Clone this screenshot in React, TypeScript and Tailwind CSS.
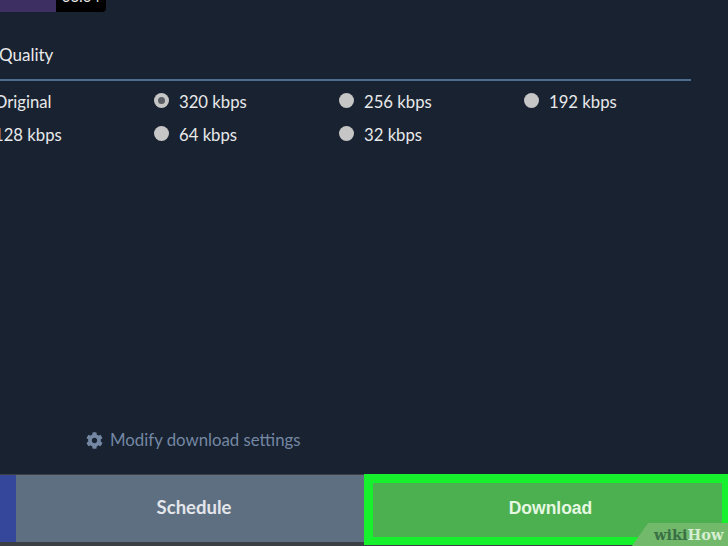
import { FaCog } from "react-icons/fa";

const rows = [
  ["Original", "320 kbps", "256 kbps", "192 kbps"],
  ["128 kbps", "64 kbps", "32 kbps"],
];

const Radio = ({ checked }: { checked: boolean }) => (
  <span className="flex items-center justify-center w-[15px] h-[15px] -mt-[3px] rounded-full bg-[#c6c6c6] shrink-0">
    {checked && <span className="w-[7px] h-[7px] rounded-full bg-[#5a5f66]" />}
  </span>
);

export default function App() {
  return (
    <div className="relative flex flex-col w-[728px] h-[546px] overflow-hidden bg-[#182230] font-['Lato','Noto_Sans',sans-serif] text-[#e8e9ea]">
      <div className="flex h-3 shrink-0">
        <div className="w-[56px] bg-[#3e2f63]" />
        <div className="w-[50px] bg-black rounded-br text-[15px] leading-[12px] text-center overflow-hidden">
          <span className="block -mt-[10px]">03:04</span>
        </div>
      </div>

      <div className="mt-[33px] h-5 text-[17px] leading-5 -ml-px">Quality</div>
      <div className="mt-[14px] w-[691px] h-[2px] bg-[#4a6d92] shrink-0" />

      <div className="mt-[11px] -ml-[31px] flex flex-col gap-[13px] text-[16.7px]">
        {rows.map((row, i) => (
          <div key={i} className="flex h-5 items-center">
            {row.map((label) => (
              <div key={label} className="flex items-center gap-[10px] w-[185px] shrink-0">
                <Radio checked={label === "320 kbps"} />
                <span className="leading-5">{label}</span>
              </div>
            ))}
          </div>
        ))}
      </div>

      <div className="mt-auto flex items-center gap-[7px] pl-[86px] pb-[24px] text-[#7487a3] text-[16.8px] leading-5">
        <FaCog size={17} />
        <span>Modify download settings</span>
      </div>

      <div className="flex h-[72px] shrink-0 bg-[#3c3f44]">
        <div className="w-[16px] h-[67px] mt-px bg-[#35479b]" />
        <div className="w-[348px] h-[67px] mt-px pl-2 pb-[2px] bg-[#5f6f82] flex items-center justify-center font-bold text-[18.5px] text-[#e3e6ea]">
          Schedule
        </div>
        <div className="flex-1 border-[9px] border-b-[8px] border-r-[6px] border-[#17f02c] bg-[#4caf50] pl-[6px] pb-[4px] flex items-center justify-center font-['Liberation_Sans',sans-serif] font-bold text-[17.5px] text-[#e6f8e2] h-[71px]">
          Download
        </div>
      </div>

      <div className="absolute right-0 bottom-0 w-[96px] h-[23px]">
        <svg width="96" height="23" className="absolute inset-0">
          <polygon points="16,0 96,0 96,23 0,23" fill="#72b96c" />
        </svg>
        <div className="relative pl-[22px] pt-[2px] font-['DejaVu_Serif',serif] font-bold text-[14.5px] leading-5">
          <span className="text-[#3a6f45]">wiki</span>
          <span className="text-[#d6eed1]">How</span>
        </div>
      </div>
    </div>
  );
}
